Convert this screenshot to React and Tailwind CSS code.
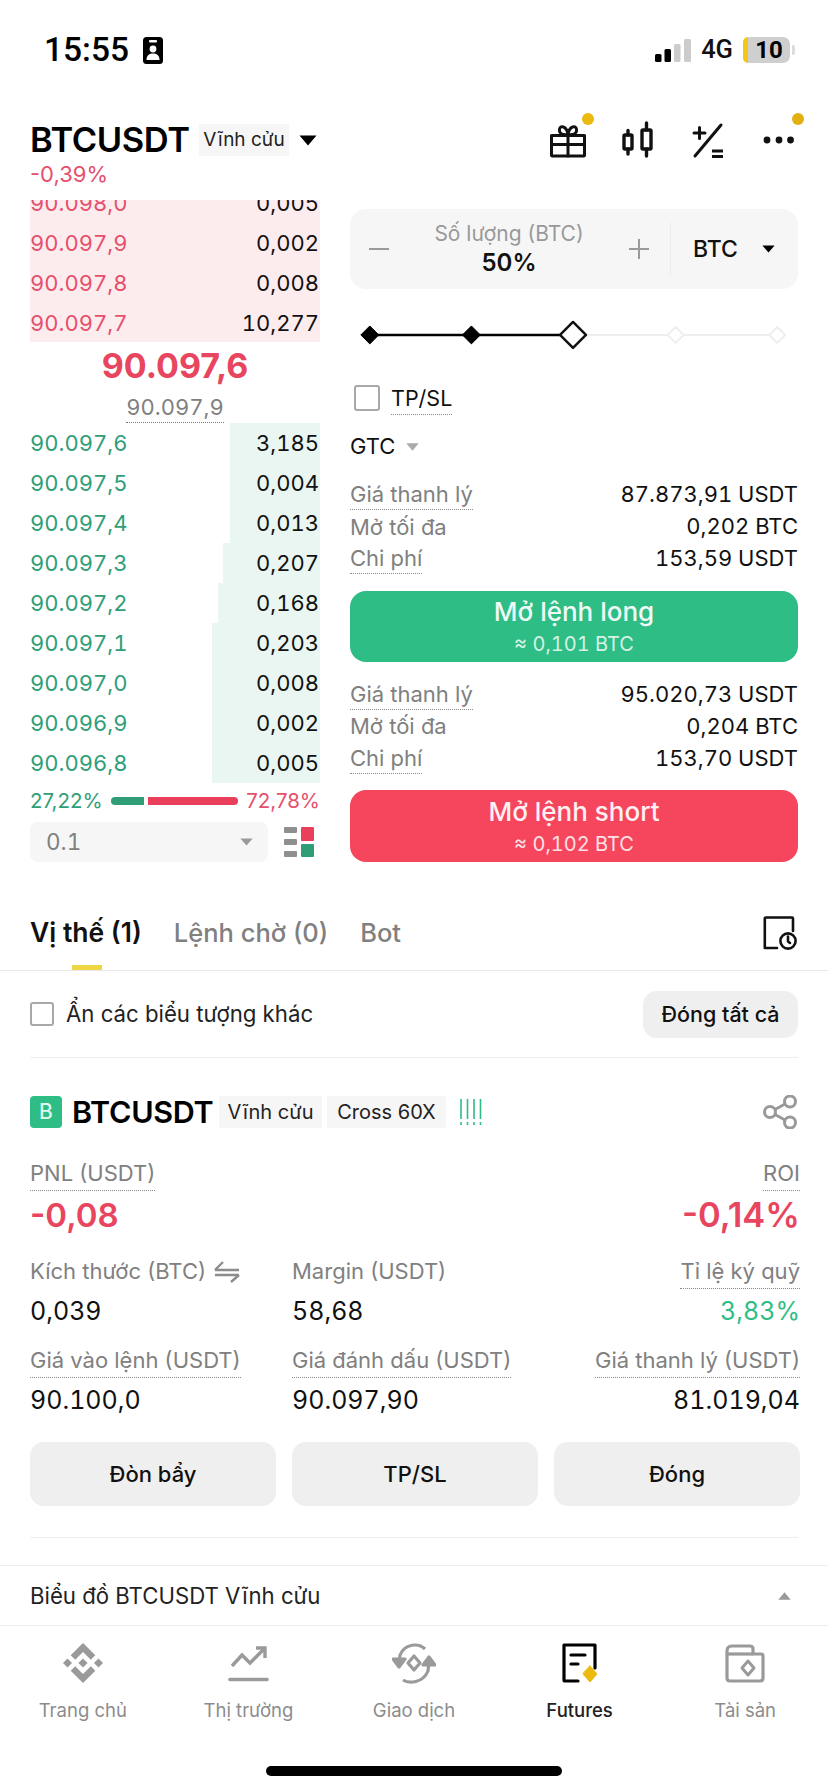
const asks = [["90.098,0","0,005"],["90.097,9","0,002"],["90.097,8","0,008"],["90.097,7","10,277"]];
const bids = [["90.097,6","3,185",90],["90.097,5","0,004",90],["90.097,4","0,013",90],["90.097,3","0,207",97],["90.097,2","0,168",102],["90.097,1","0,203",108],["90.097,0","0,008",108],["90.096,9","0,002",108],["90.096,8","0,005",108]];

function Tri({ className, up }) {
  return (
    <svg viewBox="0 0 18 11" className={className}>
      <path d={up ? "M9 0.5 L17.5 10.5 L0.5 10.5 Z" : "M0.5 0.5 L17.5 0.5 L9 10.5 Z"} fill="currentColor" />
    </svg>
  );
}

function Info({ rows }) {
  return (
    <div className="flex flex-col">
      {rows.map(([k, v, d]) => (
        <div key={k} className="flex h-8 items-center justify-between">
          <span className={"text-[22px] leading-[30px] text-[#808080] " + (d ? "h-[31px] border-b border-dotted border-[#8a8a8a]" : "")}>{k}</span>
          <span className="text-[22px] tabular-nums text-[#111]">{v}</span>
        </div>
      ))}
    </div>
  );
}

function Stat({ label, value, dotted, right, valueClass = "text-[#111]" }) {
  return (
    <div className={right ? "flex flex-col items-end" : "flex flex-col items-start"}>
      <span className={"h-[35px] text-[22px] leading-[35px] text-[#808080] " + (dotted ? "border-b border-dotted border-[#8a8a8a]" : "")}>{label}</span>
      <span className={"h-10 text-[25px] tabular-nums leading-[44px] " + valueClass}>{value}</span>
    </div>
  );
}

function NavItem({ label, active, children }) {
  return (
    <div className="flex flex-col items-center">
      <div className="flex h-11 w-11 items-center justify-center">{children}</div>
      <span className={"mt-[13px] h-6 text-[18.5px] leading-6 " + (active ? "font-medium text-[#222]" : "text-[#8c8c8c]")}>{label}</span>
    </div>
  );
}

function Chip({ className, children }) {
  return <span className={"flex h-8 items-center justify-center bg-[#f6f6f6] text-[20px] text-[#222] " + className}>{children}</span>;
}

export default function App() {
  return (
    <div className="flex h-[1792px] w-[828px] flex-col overflow-hidden bg-white font-['Inter','Noto_Sans',sans-serif] text-[#111]">
      {/* status bar */}
      <div className="flex h-[100px] items-center justify-between pl-[44px] pr-[33px] font-['Roboto','Noto_Sans',sans-serif]">
        <div className="flex items-center gap-[14px]">
          <span className="text-[33.5px] font-medium leading-none text-black">15:55</span>
          <svg viewBox="0 0 20 27" className="h-[27px] w-5">
            <rect width="20" height="27" rx="3.5" fill="#000" />
            <rect x="6" y="3" width="8" height="2.5" rx="1" fill="#fff" />
            <circle cx="10" cy="12" r="3.4" fill="#fff" />
            <path d="M3.5 23 C3.5 18 6.5 16.5 10 16.5 C13.5 16.5 16.5 18 16.5 23 Z" fill="#fff" />
          </svg>
        </div>
        <div className="flex items-center">
          <svg viewBox="0 0 36 23" className="h-[23px] w-9">
            <rect x="0" y="15" width="6.5" height="8" rx="1.5" fill="#000" />
            <rect x="9.5" y="10" width="6.5" height="13" rx="1.5" fill="#000" />
            <rect x="19" y="5" width="6.5" height="18" rx="1.5" fill="#ccc" />
            <rect x="29" y="0" width="7" height="23" rx="1.5" fill="#ccc" />
          </svg>
          <span className="ml-[10px] text-[25.5px] font-medium leading-none text-[#111]">4G</span>
          <div className="ml-[10px] flex h-[26px] w-[47px] rounded-[7px] bg-[#cfcfcf]">
            <div className="w-[5px] rounded-l-[7px] bg-[#f5c518]" />
            <span className="flex-1 text-center text-[24px] font-bold leading-[26px] text-black">10</span>
          </div>
          <div className="ml-[2px] h-[10px] w-[3px] rounded-r-[2px] bg-[#ddd]" />
        </div>
      </div>

      {/* header */}
      <div className="flex h-[100px] pl-[30px] pr-[28px]">
        <div className="flex flex-col">
          <div className="mt-[24px] flex h-8 items-center">
            <span className="w-[160px] text-[34.5px] font-semibold leading-none tracking-[-0.4px] text-black">BTCUSDT</span>
            <span className="ml-[9px] flex h-8 w-[90px] items-center justify-center bg-[#f6f6f6] text-[19px] text-[#222]">Vĩnh cửu</span>
            <Tri className="ml-[10px] h-[11px] w-[18px] text-black" />
          </div>
          <span className="mt-[3px] text-[22px] leading-[30px] text-[#e5506c]">-0,39%</span>
        </div>
        <div className="ml-auto mt-[18px] flex h-11 gap-[26px]">
          <svg viewBox="0 0 44 44" className="h-11 w-11 overflow-visible" fill="none" stroke="#111" strokeWidth="3" strokeLinejoin="round" strokeLinecap="round">
            <path d="M5.5 17.5 H38.5 V37 Q38.5 38 37.5 38 H6.5 Q5.5 38 5.5 37 Z" />
            <path d="M5.5 26.5 H38.5 M22 17.5 V38" />
            <path d="M22 17 C14 17 13 14 13.5 11 C14.5 7 21 8 22 17 C23 8 29.5 7 30.5 11 C31 14 30 17 22 17 Z" />
            <circle cx="42" cy="1" r="6" fill="#ecb90f" stroke="none" />
          </svg>
          <svg viewBox="0 0 44 44" className="h-11 w-11" fill="none" stroke="#111" strokeWidth="3.4" strokeLinecap="round" strokeLinejoin="round">
            <rect x="8" y="17" width="8" height="14" rx="1" />
            <path d="M12 12.5 V17 M12 31 V36" />
            <rect x="26" y="12" width="9" height="19" rx="1" />
            <path d="M30.5 5 V12 M30.5 31 V38" />
          </svg>
          <svg viewBox="0 0 44 44" className="h-11 w-11" fill="none" stroke="#111" strokeLinecap="round">
            <path d="M9 38 L35 7" strokeWidth="3" />
            <path d="M8 15 H19 M13.5 9.5 V20.5" strokeWidth="3" />
            <path d="M26 33 H37 M26 38.5 H37" strokeWidth="3" strokeLinecap="butt" />
          </svg>
          <svg viewBox="0 0 44 44" className="h-11 w-11 overflow-visible">
            <circle cx="11" cy="22" r="3.4" fill="#111" />
            <circle cx="23" cy="22" r="3.4" fill="#111" />
            <circle cx="34.5" cy="22" r="3.4" fill="#111" />
            <circle cx="42" cy="1" r="6" fill="#e3b014" />
          </svg>
        </div>
      </div>

      {/* trading area */}
      <div className="flex h-[662px] gap-[30px] pl-[30px] pr-[30px]">
        <div className="flex w-[290px] flex-col">
          <div className="flex h-[143px] flex-col justify-end overflow-hidden bg-[#fdecee]">
            {asks.map(([p, q]) => (
              <div key={p} className="flex h-10 shrink-0 items-center justify-between pt-[2px] text-[22px] tabular-nums">
                <span className="text-[#e5506c]">{p}</span>
                <span className="pr-[1px] text-[#111]">{q}</span>
              </div>
            ))}
          </div>
          <div className="flex h-[46px] items-center justify-center pt-[2px] text-[34px] font-bold leading-none text-[#e8455f]">90.097,6</div>
          <div className="flex h-[35px] justify-center">
            <span className="h-[35px] border-b border-dotted border-[#777] text-[22px] tabular-nums leading-[38px] text-[#808080]">90.097,9</span>
          </div>
          <div className="flex flex-col">
            {bids.map(([p, q, w]) => (
              <div key={p} className="flex h-10 items-center justify-between text-[22px] tabular-nums">
                <span className="text-[#2f9e77]">{p}</span>
                <span className="flex h-10 items-center justify-end bg-[#e9f6f1] pr-[1px] text-[#111]" style={{ width: w }}>{q}</span>
              </div>
            ))}
          </div>
          <div className="flex h-9 items-center justify-between text-[20.5px]">
            <span className="text-[#2f9e77]">27,22%</span>
            <div className="flex w-[127px] gap-1">
              <div className="h-2 w-[33px] rounded-l-full bg-[#2f9e77]" />
              <div className="h-2 flex-1 rounded-r-full bg-[#ea3f5c]" />
            </div>
            <span className="text-[#e5506c]">72,78%</span>
          </div>
          <div className="mt-[3px] flex items-center gap-4">
            <div className="flex h-10 w-[238px] items-center justify-between rounded-lg bg-[#f6f6f6] pl-4 pr-[15px]">
              <span className="text-[22.5px] tabular-nums text-[#808080]">0.1</span>
              <Tri className="h-2 w-[13px] text-[#9a9a9a]" />
            </div>
            <svg viewBox="0 0 30 30" className="h-[30px] w-[30px]">
              <rect x="0" y="0" width="13" height="6" rx="1" fill="#8f8f8f" />
              <rect x="0" y="12" width="13" height="6" rx="1" fill="#8f8f8f" />
              <rect x="0" y="24" width="13" height="6" rx="1" fill="#8f8f8f" />
              <rect x="17" y="0" width="13" height="14" rx="1" fill="#ea3f5c" />
              <rect x="17" y="17" width="13" height="13" rx="1" fill="#2f9e77" />
            </svg>
          </div>
        </div>

        <div className="flex w-[448px] flex-col">
          <div className="mt-[9px] flex h-[80px] items-center rounded-[16px] bg-[#f6f6f6]">
            <svg viewBox="0 0 20 20" className="ml-[19px] h-5 w-5" stroke="#9a9a9a" strokeWidth="2"><path d="M0 10 H20" /></svg>
            <div className="flex flex-1 flex-col items-center pt-[2px]">
              <span className="text-[21px] leading-[26px] text-[#999]">Số lượng (BTC)</span>
              <span className="text-[24px] font-semibold leading-[32px] text-[#111]">50%</span>
            </div>
            <svg viewBox="0 0 20 20" className="mr-[21px] h-5 w-5" stroke="#9a9a9a" strokeWidth="2"><path d="M0 10 H20 M10 0 V20" /></svg>
            <div className="h-[54px] w-px bg-[#eeeeee]" />
            <span className="ml-[22px] text-[23px] font-medium text-[#111]">BTC</span>
            <Tri className="ml-[24px] mr-[23px] h-2 w-[13px] text-black" />
          </div>

          <svg viewBox="0 0 448 40" className="mt-[26px] h-10 w-[448px]">
            <path d="M19 20 H223" stroke="#000" strokeWidth="2.5" />
            <path d="M237 20 H428" stroke="#eeeeee" strokeWidth="2" />
            <path d="M19 11 L28 20 L19 29 L10 20 Z M121 11 L130 20 L121 29 L112 20 Z" fill="#000" stroke="#000" strokeLinejoin="round" />
            <path d="M223 7 L236 20 L223 33 L210 20 Z" fill="#fff" stroke="#111" strokeWidth="2.5" strokeLinejoin="round" />
            <path d="M326 12 L334 20 L326 28 L318 20 Z M428 12 L436 20 L428 28 L420 20 Z" fill="#fff" stroke="#eeeeee" strokeWidth="2" strokeLinejoin="round" />
          </svg>

          <div className="mt-[30px] flex h-[26px] items-center pl-1">
            <div className="h-[26px] w-[26px] rounded-[3px] border-2 border-[#a8a8a8]" />
            <span className="ml-[11px] mt-[4px] h-[31px] border-b border-dotted border-[#8a8a8a] text-[21.5px] leading-[28px] text-[#111]">TP/SL</span>
          </div>

          <div className="mt-[22px] flex h-7 items-center">
            <span className="text-[22px] text-[#111]">GTC</span>
            <Tri className="ml-[10px] h-2 w-[15px] text-[#aaa]" />
          </div>

          <div className="mt-[18px]">
            <Info rows={[["Giá thanh lý","87.873,91 USDT",1],["Mở tối đa","0,202 BTC",0],["Chi phí","153,59 USDT",1]]} />
          </div>
          <div className="mt-[16px] flex h-[72px] flex-col items-center justify-center rounded-[16px] bg-[#2ebd85]">
            <span className="text-[26px] font-medium leading-[36px] text-[#eefaf5]">Mở lệnh long</span>
            <span className="text-[20px] tabular-nums leading-[28px] text-[#d5f2e6]">≈ 0,101 BTC</span>
          </div>
          <div className="mt-[16px]">
            <Info rows={[["Giá thanh lý","95.020,73 USDT",1],["Mở tối đa","0,204 BTC",0],["Chi phí","153,70 USDT",1]]} />
          </div>
          <div className="mt-[16px] flex h-[72px] flex-col items-center justify-center rounded-[16px] bg-[#f6465d]">
            <span className="text-[26px] font-medium leading-[36px] text-[#fff1f3]">Mở lệnh short</span>
            <span className="text-[20px] tabular-nums leading-[28px] text-[#fde0e4]">≈ 0,102 BTC</span>
          </div>
        </div>
      </div>

      {/* tabs */}
      <div className="relative flex h-[109px] items-center border-b border-[#e8e8e8] pl-[30px] pr-[31px] pt-[34px]">
        <span className="text-[26.5px] font-semibold text-[#111]">Vị thế (1)</span>
        <span className="ml-[32px] text-[25.5px] font-medium text-[#808080]">Lệnh chờ (0)</span>
        <span className="ml-[32px] text-[25.5px] font-medium text-[#808080]">Bot</span>
        <svg viewBox="0 0 34 34" className="ml-auto h-[34px] w-[34px]" fill="none" stroke="#111" strokeWidth="2.6" strokeLinecap="round" strokeLinejoin="round">
          <path d="M30 15 V2.5 Q30 1.5 29 1.5 H3 Q1.8 1.5 1.8 2.5 V32 H14" />
          <circle cx="25" cy="25" r="7.6" />
          <path d="M25 20.5 V25.5 L27 27" />
        </svg>
        <div className="absolute bottom-0 left-[72px] h-[5px] w-[30px] bg-[#f0d544]" />
      </div>

      {/* filter */}
      <div className="mx-[30px] flex h-[87px] items-center border-b border-[#eeeeee]">
        <div className="h-6 w-6 rounded-[3px] border-2 border-[#a8a8a8]" />
        <span className="ml-3 text-[22.2px] text-[#222]">Ẩn các biểu tượng khác</span>
        <button className="ml-auto flex h-[47px] w-[155px] items-center justify-center rounded-[14px] bg-[#efefef] text-[21.5px] font-medium text-[#111]">Đóng tất cả</button>
      </div>

      {/* position card */}
      <div className="flex flex-col pl-[30px] pr-[28px]">
        <div className="mt-[38px] flex h-8 items-center">
          <span className="flex h-8 w-8 items-center justify-center rounded-[4px] bg-[#2ebd85] text-[21px] font-medium text-[#dff6ec]">B</span>
          <span className="ml-[10px] w-[147px] text-[30.5px] font-semibold tracking-[-0.3px] text-black">BTCUSDT</span>
          <Chip className="w-[103px] text-[19.5px]">Vĩnh cửu</Chip>
          <Chip className="ml-[5px] w-[119px]">Cross 60X</Chip>
          <svg viewBox="0 0 26 26" className="ml-[13px] h-[26px] w-[26px]" stroke="#2ebd85" strokeWidth="1.6">
            <path d="M2 0 V20 M8.5 0 V20 M15 0 V20 M21.5 0 V20" />
            <path d="M2 23 V26 M8.5 23 V26 M15 23 V26 M21.5 23 V26" />
          </svg>
          <svg viewBox="0 0 34 34" className="ml-auto mr-[3px] h-[34px] w-[34px]" fill="none" stroke="#999" strokeWidth="3">
            <circle cx="7" cy="17" r="5.5" />
            <circle cx="27" cy="6.5" r="5.5" />
            <circle cx="27" cy="27.5" r="5.5" />
            <path d="M12 14.5 L22 9 M12 19.5 L22 25" />
          </svg>
        </div>

        <div className="mt-[28px] flex items-start justify-between">
          <div className="flex flex-col items-start">
            <span className="h-[35px] border-b border-dotted border-[#8a8a8a] text-[22px] leading-[34px] text-[#808080]">PNL (USDT)</span>
            <span className="h-12 text-[33px] font-semibold leading-[48px] text-[#e8455f]">-0,08</span>
          </div>
          <div className="flex flex-col items-end">
            <span className="h-[35px] border-b border-dotted border-[#8a8a8a] text-[22px] leading-[34px] text-[#808080]">ROI</span>
            <span className="h-12 text-[34.5px] font-semibold leading-[48px] text-[#e8455f]">-0,14%</span>
          </div>
        </div>

        <div className="mt-[15px] grid grid-cols-[246px_246px_246px] gap-x-4 gap-y-[14px]">
          <div className="flex flex-col items-start">
            <span className="flex h-[35px] items-center gap-[8px] text-[22px] leading-[35px] text-[#808080]">
              Kích thước (BTC)
              <svg viewBox="0 0 26 22" className="h-[22px] w-[26px]" fill="none" stroke="#8c8c8c" strokeWidth="2.4">
                <path d="M1 9 H25 M1 9 L9 1" />
                <path d="M1 14 H25 M25 14 L17 21" />
              </svg>
            </span>
            <span className="h-10 text-[25px] tabular-nums leading-[44px] text-[#111]">0,039</span>
          </div>
          <Stat label="Margin (USDT)" value="58,68" />
          <Stat label="Tỉ lệ ký quỹ" value="3,83%" dotted right valueClass="text-[#2ebd85]" />
          <Stat label="Giá vào lệnh (USDT)" value="90.100,0" dotted />
          <Stat label="Giá đánh dấu (USDT)" value="90.097,90" dotted />
          <Stat label="Giá thanh lý (USDT)" value="81.019,04" dotted right />
        </div>

        <div className="mt-[24px] grid grid-cols-3 gap-4">
          {["Đòn bẩy", "TP/SL", "Đóng"].map((t) => (
            <button key={t} className="h-16 rounded-[14px] bg-[#efefef] text-[22px] font-medium text-[#111]">{t}</button>
          ))}
        </div>
      </div>

      <div className="mx-[30px] mt-[31px] h-px bg-[#eeeeee]" />

      <div className="mt-[27px] flex h-[61px] items-center border-y border-[#eeeeee] pl-[30px] pr-[36px]">
        <span className="text-[22.2px] text-[#222]">Biểu đồ BTCUSDT Vĩnh cửu</span>
        <Tri up className="ml-auto h-2 w-[15px] text-[#9a9a9a]" />
      </div>

      {/* bottom nav */}
      <div className="grid grid-cols-5 pt-[15px]">
        <NavItem label="Trang chủ">
          <svg viewBox="0 0 126.61 126.61" className="h-10 w-10" fill="#9a9a9a">
            <path d="M38.73 53.2l24.59-24.58 24.6 24.6 14.3-14.31L63.32 0 24.43 38.89z" />
            <path d="M0 63.31l14.3-14.31 14.31 14.31-14.31 14.3z" />
            <path d="M38.73 73.41l24.59 24.59 24.6-24.6 14.31 14.29-38.9 38.91-38.91-38.88-.02-.02z" />
            <path d="M98.01 63.31l14.3-14.31 14.31 14.3-14.31 14.32z" />
            <path d="M77.83 63.3L63.32 48.78 52.59 59.51l-1.24 1.23-2.54 2.54 14.51 14.5 14.51-14.47z" />
          </svg>
        </NavItem>
        <NavItem label="Thị trường">
          <svg viewBox="0 0 44 44" className="h-11 w-11" fill="none" stroke="#9a9a9a" strokeWidth="3.4" strokeLinejoin="miter">
            <path d="M6 25 L16 14 L24 22 L38 8" />
            <path d="M30 7 H39 V17" />
            <path d="M4 38.5 H41" strokeWidth="3.6" strokeLinecap="round" />
          </svg>
        </NavItem>
        <NavItem label="Giao dịch">
          <svg viewBox="0 0 44 44" className="h-11 w-11" fill="none" stroke="#9a9a9a" strokeWidth="3.2">
            <path d="M33 8 C27 2 13 2 8 14 L7 22" />
            <path d="M11 39 C17 43 31 42 36 30 L37 20" />
            <path d="M1 18 L7 26 L13 18 Z" fill="#9a9a9a" strokeLinejoin="round" />
            <path d="M31 24 L37 16 L43 24 Z" fill="#9a9a9a" strokeLinejoin="round" />
            <path d="M22 15 L28 22 L22 29 L16 22 Z" strokeLinejoin="round" />
          </svg>
        </NavItem>
        <NavItem label="Futures" active>
          <svg viewBox="0 0 44 44" className="h-11 w-11" fill="none" stroke="#000" strokeWidth="3.2" strokeLinecap="round" strokeLinejoin="round">
            <path d="M37 27 V4 H6 V39 Q6 40 7 40 H20" />
            <path d="M13 14 H27 M13 23 H20" />
            <path d="M32 25 L39 33 L32 41 L25 33 Z" fill="#ecb90f" stroke="#ecb90f" strokeWidth="1" />
          </svg>
        </NavItem>
        <NavItem label="Tài sản">
          <svg viewBox="0 0 44 44" className="h-11 w-11" fill="none" stroke="#9a9a9a" strokeWidth="3.2" strokeLinejoin="round">
            <path d="M4 10 Q4 5 9 5 H27 Q30 5 30 8 V13 H38 Q40 13 40 15 V37 Q40 40 37 40 H7 Q4 40 4 37 Z" />
            <path d="M4 13 H30" />
            <path d="M25 20 L31 27 L25 34 L19 27 Z" strokeWidth="3" />
          </svg>
        </NavItem>
      </div>

      <div className="mt-[44px] flex justify-center">
        <div className="h-[10px] w-[296px] rounded-full bg-black" />
      </div>
    </div>
  );
}
